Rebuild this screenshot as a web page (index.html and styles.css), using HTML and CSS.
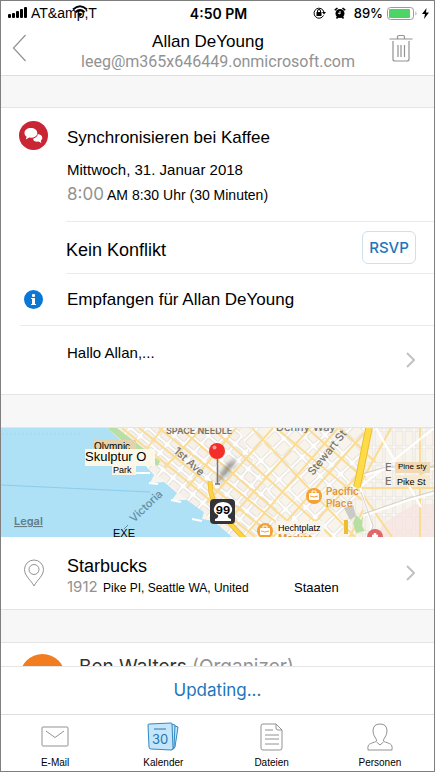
FILE: index.html
```html
<!DOCTYPE html>
<html lang="de">
<head>
<meta charset="utf-8">
<meta name="viewport" content="width=device-width, initial-scale=1">
<title>Synchronisieren bei Kaffee</title>
<link rel="stylesheet" href="styles.css">
</head>
<body>
<div class="phone">
  <div class="status">
    <div class="status-side">
      <svg class="signal" width="20" height="12" viewBox="0 0 20 12" aria-hidden="true"><rect x="0" y="7" width="3" height="4" rx="1"/><rect x="4" y="6" width="3" height="5" rx="1"/><rect x="8" y="4" width="3" height="7" rx="1"/><rect x="12" y="2" width="3" height="9" rx="1"/><rect x="16" y="0" width="3" height="11" rx="1"/></svg>
      <span class="carrier">AT&amp;amp;T
        <svg class="wifi" width="16" height="12" viewBox="0 0 16 12" aria-hidden="true"><path d="M1 4.500Q8-2 15 4.500M3.500 7.200Q8 3 12.500 7.200" fill="none" stroke="#000" stroke-width="2"/><path d="M5.500 9Q8 7 10.500 9L8 11.500Z"/></svg>
      </span>
    </div>
    <span class="clock">4:50 PM</span>
    <div class="status-side status-right">
      <svg width="13" height="12" viewBox="0 0 13 12" aria-hidden="true"><path d="M10.500 8.500A5 5 0 1 1 10.900 5" fill="none" stroke="#000"/><path d="M9 5h4L11 7.500Z"/><rect x="3.500" y="5" width="5" height="4"/><path d="M4.500 5V4a1.500 1.500 0 0 1 3 0V5" fill="none" stroke="#000"/></svg>
      <svg class="alarm" width="12" height="12" viewBox="0 0 12 12" aria-hidden="true"><circle cx="6" cy="6.500" r="4.500"/><path d="M.8 3.200L3.500 1M11.200 3.200L8.500 1M2.500 11.500l1.500-2M9.500 11.500L8 9.500" stroke="#000" stroke-width="1.600"/><path d="M6 4v3l-2-1" fill="none" stroke="#fff"/></svg>
      <span class="percent">89%</span>
      <svg width="31" height="13" viewBox="0 0 31 13" aria-hidden="true"><rect x=".5" y=".5" width="26" height="12" rx="3" fill="#fff" stroke="#999"/><rect x="2" y="2" width="21" height="9" rx="1" fill="#4cd464"/><path d="M28.500 4.500v4q2-2 0-4" fill="#999"/></svg>
      <svg class="bolt" width="7" height="11" viewBox="0 0 7 11" aria-hidden="true"><path d="M4.500 0L0 6h3L2 11l5-6.500H4Z"/></svg>
    </div>
  </div>

  <header class="header">
    <button class="icon-button" type="button" aria-label="Zurück"><svg width="15" height="28" viewBox="0 0 15 28"><path d="M13.500 1L1.500 14l12 13" fill="none" stroke="#929292" stroke-width="1.200"/></svg></button>
    <div class="heading">
      <h1>Allan DeYoung</h1>
      <p>leeg@m365x646449.onmicrosoft.com</p>
    </div>
    <button class="icon-button trash" type="button" aria-label="Löschen"><svg width="24" height="28" viewBox="0 0 24 28"><path d="M.5 5h23M8.500 5V3q0-1.500 1.500-1.500h4q1.500 0 1.500 1.500v2M4 7v18q0 2 2 2h12q2 0 2-2V7M9 11v12M12 11v12M15.500 11v12" fill="none" stroke="#929292" stroke-width="1.200"/></svg></button>
  </header>

  <main class="content">
    <section class="card">
      <div class="summary">
        <svg class="badge" width="29" height="29" viewBox="0 0 29 29" aria-hidden="true"><circle cx="14.500" cy="14.500" r="14.500" fill="#c92534"/><path d="M11.800 7c-3.600 0-6.300 2.100-6.300 4.900 0 1.600.8 2.900 2.100 3.800L6.800 18.500l3.400-1.900c4.600.6 8.100-1.600 8.100-4.700C18.300 9.100 15.400 7 11.800 7Z" fill="#fff"/><path d="M18.800 13c2.700.2 4.500 1.700 4.500 3.800 0 1.200-.6 2.200-1.500 2.900l.6 2.400-2.900-1.500c-3.100.5-5.300-.9-5.500-2.900 2.700-.6 4.500-2.200 4.800-4.700Z" fill="#fff"/></svg>
        <div class="summary-text">
          <h2>Synchronisieren bei Kaffee</h2>
          <p class="date">Mittwoch, 31. Januar 2018</p>
          <p class="time"><span class="ios">8:00</span> AM 8:30 Uhr (30 Minuten)</p>
        </div>
      </div>
      <div class="conflict">
        <span class="large">Kein Konflikt</span>
        <button class="rsvp" type="button">RSVP</button>
      </div>
      <div class="received">
        <svg class="info" width="19" height="19" viewBox="0 0 19 19" aria-hidden="true"><circle cx="9.500" cy="9.500" r="9.500" fill="#0a77d5"/><rect x="8" y="4" width="3" height="3" rx="1" fill="#fff"/><path d="M7 8h4v6h1v1H7v-1h1V9H7Z" fill="#fff"/></svg>
        <span>Empfangen für Allan DeYoung</span>
      </div>
      <a class="message" href="#nachricht"><span>Hallo Allan,...</span><svg class="chevron" width="9" height="16" viewBox="0 0 9 16" aria-hidden="true"><path d="M1 1l7 7-7 7"/></svg></a>
    </section>

    <section class="card place">
      <svg class="map" viewBox="1 428 433 109" role="img" aria-label="Karte">
        <defs>
          <pattern id="west" width="13" height="11" patternUnits="userSpaceOnUse" patternTransform="translate(217 486) rotate(40)"><rect width="13" height="11" fill="#fff"/><rect x="1.500" y="1.500" width="10" height="8" rx="1" fill="#f5f0e9" stroke="#dedad3" stroke-width=".8"/></pattern>
          <pattern id="mid" width="13" height="16" patternUnits="userSpaceOnUse" patternTransform="translate(270 470) rotate(46)"><rect width="13" height="16" fill="#fff"/><rect x="1.500" y="1.500" width="10" height="13" rx="1" fill="#f8f3eb" stroke="#e1ddd5" stroke-width=".8"/></pattern>
          <pattern id="east" width="10" height="17" patternUnits="userSpaceOnUse" patternTransform="translate(374 430)"><rect width="10" height="17" fill="#fff"/><rect x="1" y="1" width="8" height="15" fill="#f8f3eb" stroke="#e2ded6" stroke-width=".8"/></pattern>
          <clipPath id="land"><path d="M107 428H434V537H232L214 521L202 519L204 512L187 500L172 500L177 493L164 482L150 483L154 475L143 463L126 445Z"/></clipPath>
          <filter id="soft"><feGaussianBlur stdDeviation="2"/></filter>
        </defs>
        <rect x="1" y="428" width="433" height="109" fill="#aee0f6"/>
        <g clip-path="url(#land)">
          <rect x="100" y="428" width="334" height="109" fill="#f9f4ec"/>
          <path d="M118 428H250L330 537H232L145 465Z" fill="url(#west)"/>
          <path d="M238 428H372L355 537H290Z" fill="url(#mid)"/>
          <path d="M372 428H434V537H350L357 487Z" fill="url(#east)"/>
          <path d="M385 522l30-18h19v33h-60Z" fill="#f8e2e1" opacity=".7"/>
          <path d="M107 428h10l43 33-2 5-13-6-18-15Z" fill="#b9dfa5"/>
          <g fill="none" stroke="#fbdc94" stroke-width="2">
            <path d="M122 428L255 537M139 428L274 537M159 428L286 530M180 428L306 537M212 428L332 537M252 428L355 537M276 428L362 500M307 428L360 475M340 428L375 462M145 451L163 428M164 468L202 428M187 488L236 428M207 503L273 428M228 521L310 428M248 532L338 428M273 537L364 433M302 537L356 477M391 428L358 488L392 537M356 488H434M363 510L350 537M409 483L434 465M420 537V428"/>
          </g>
          <g fill="none" stroke="#fff" stroke-width="2.200"><path d="M365 475L386 469H434M360 487L372 526L367 537M363 516L409 500L434 493M360 487L434 428M376 428L421 507"/></g>
          <g fill="none" stroke="#c9c8c3" stroke-width=".8"><path d="M362 474L386 467H434M363 514L409 498L434 491M361 492L373 526L369 537"/></g>
          <path d="M344 508l9-3 3 11-6 4Z" fill="#cccac5"/>
          <path d="M353 523l3-8 5 5 2-4-1 10 3 5-9 2Z" fill="#b7e0a0"/>
          <path d="M369 428L357 487" fill="none" stroke="#eabd36" stroke-width="7.500"/>
          <path d="M369 428L357 487" fill="none" stroke="#ffdc45" stroke-width="5.500"/>
          <path d="M346 520v14" stroke="#efbd31" stroke-width="4"/>
          <path d="M210 481L211 493Q213 501 220 511T245 539" fill="none" stroke="#efb936" stroke-width="5"/>
          <path d="M210 481L211 493Q213 501 220 511T245 539" fill="none" stroke="#ffd341" stroke-width="3.500"/>
        </g>
        <path d="M1 485L150 492" stroke="#83c6ef" stroke-width=".8"/>
        <path d="M2 434H80" stroke="#91cdef" stroke-width=".5" stroke-dasharray="2 2"/>
        <path d="M130 473h20M149 483l9 1M171 500l10 2M192 519l10 2" stroke="#fff" stroke-width="2"/>
        <g class="map-text">
          <text x="166" y="434" class="district">SPACE NEEDLE</text>
          <text x="276" y="431" class="street">Denny Way</text>
          <text transform="translate(173 452) rotate(42)" class="street">1st Ave</text>
          <text transform="translate(313 476) rotate(-51)" class="street">Stewart St</text>
          <text transform="translate(134 523) rotate(-44)" class="bay">Victoria</text>
          <path d="M124 529l4-4" stroke="#668e9f"/>
          <text x="14" y="525" class="legal">Legal</text>
          <text x="326" y="495" class="mall">Pacific</text>
          <text x="326" y="507" class="mall">Place</text>
          <text x="278" y="542" class="mall">Market</text>
          <text x="385" y="471" class="street">E</text>
          <text x="385" y="485" class="street">E</text>
        </g>
        <g id="shops"><circle cx="314" cy="496" r="8" fill="#f3a233"/><rect x="309" y="493" width="10" height="7" rx="1" fill="#fff"/><path d="M312 493v-2h4v2M309 496h10" fill="none" stroke="#fff"/><path d="M310 496q4 2 8 0" fill="none" stroke="#f3a233"/><circle cx="265" cy="531" r="8" fill="#f3a233"/><rect x="260" y="528" width="10" height="7" rx="1" fill="#fff"/><path d="M263 528v-2h4v2" fill="none" stroke="#fff"/><path d="M261 531q4 2 8 0" fill="none" stroke="#f3a233"/></g>
        <circle cx="375" cy="537" r="8" fill="#df6969"/><path d="M375 533v5M372 536h6" stroke="#fff" stroke-width="2.500"/>
        <path d="M217 482Q224 463 236 459Q235 467 217 484" fill="#555" opacity=".6" filter="url(#soft)"/>
        <path d="M217.500 455v29M215 484h5" stroke="#777" stroke-width="1.500"/>
        <circle cx="217" cy="451" r="8" fill="#f32e2b"/><circle cx="214.500" cy="447.500" r="2" fill="#ff9c98"/>
        <rect x="210" y="499" width="25" height="25" rx="4" fill="#343437"/>
        <path d="M215 519q4-1 3-4-5-2-4-7 2-6 9-6 7 0 9 6 1 5-4 7-1 3 3 4v2h-16Z" fill="#fff"/>
        <text x="223" y="514" class="route">99</text>
        <rect x="93" y="440" width="43" height="11" fill="#e4d3aa"/>
        <text x="94" y="450" class="overlay small">Olympic</text>
        <rect x="112" y="463" width="24" height="12" fill="#faf4e5"/>
        <text x="113" y="473" class="overlay tiny">Park</text>
        <rect x="85" y="449" width="70" height="17" fill="#fbf8e9"/>
        <text x="85" y="461" class="overlay medium">Skulptur O</text>
        <text x="113" y="537" class="overlay exit">EXE</text>
        <rect x="276" y="521" width="48" height="12" fill="#f9f5ed"/>
        <text x="278" y="531" class="overlay tiny">Hechtplatz</text>
        <rect x="395" y="462" width="35" height="11" fill="#f1d9b5"/>
        <text x="398" y="469" class="overlay tiniest">Pine sty</text>
        <rect x="395" y="475" width="35" height="12" fill="#f8ead1"/>
        <text x="397" y="485" class="overlay tiny">Pike St</text>
      </svg>
      <a class="location" href="#ort">
        <svg class="pin" width="22" height="28" viewBox="0 0 22 28" aria-hidden="true"><path d="M11 27C8 21 1.500 17 1.500 10.500a9.500 9.500 0 0 1 19 0C20.500 17 14 21 11 27Z"/><circle cx="11" cy="10.500" r="5"/></svg>
        <span class="location-text">
          <strong>Starbucks</strong>
          <span class="address"><span class="number">1912</span> <span class="street-line">Pike PI, Seattle WA, United</span> <span class="country">Staaten</span></span>
        </span>
        <svg class="chevron" width="9" height="16" viewBox="0 0 9 16" aria-hidden="true"><path d="M1 1l7 7-7 7"/></svg>
      </a>
    </section>

    <section class="card organizer">
      <span class="avatar"></span>
      <span>Ben Walters <span class="role">(Organizer)</span></span>
    </section>
  </main>

  <div class="updating" role="status">Updating...</div>
  <nav class="tabs">
    <a href="#mail"><svg width="28" height="30" viewBox="0 0 28 30" aria-hidden="true"><rect x="1" y="5" width="26" height="19" rx="1"/><path d="M5 9l9 6.500L23 9"/></svg><span>E-Mail</span></a>
    <a href="#kalender" aria-current="page"><svg width="34" height="30" viewBox="0 0 34 30" aria-hidden="true"><path class="cal" d="M26 3l6 2-3 20q-1 3-4 2L24 4Z"/><path class="cal" d="M25 2l4 1-1 22q0 2-3 3Z"/><path class="cal" d="M2 3q0-1 1-1l22-1q1 0 1 1l1 24q0 2-2 2l-20-1q-2 0-2-2Z"/><path class="cal-line" d="M8 7h12"/><text x="14" y="22">30</text></svg><span>Kalender</span></a>
    <a href="#dateien"><svg width="24" height="30" viewBox="0 0 24 30" aria-hidden="true"><path d="M3 2h13l6 6v18q0 2-2 2H3q-2 0-2-2V4q0-2 2-2ZM16 2v4q0 2 2 2h4M5 8h8M5 13h14M5 17h14M5 22h14"/></svg><span>Dateien</span></a>
    <a href="#personen"><svg width="26" height="30" viewBox="0 0 26 30" aria-hidden="true"><path d="M9.500 19q0-2-1-3Q6 13 6 9q0-7 7-7t7 7q0 4-2.500 7-1 1-1 3c0 1 6.500 2 8 4q1 2 .5 5H1q-.5-3 .5-5c1.500-2 8-3 8-4ZM9.500 20l3.500 3 3.500-3"/></svg><span>Personen</span></a>
  </nav>
</div>
</body>
</html>
```
FILE: styles.css
```css
* { box-sizing: border-box; }

body {
  margin: 0;
  background: #fff;
  color: #000;
  font-family: "Liberation Sans", Arial, sans-serif;
  font-size: 17px;
}

h1, h2, p { margin: 0; font-weight: 400; }
a { color: inherit; text-decoration: none; }
button { font: inherit; cursor: pointer; }
svg { display: block; flex: none; }

.phone {
  display: flex;
  flex-direction: column;
  height: 100vh;
  border: 1px solid #7f7f7f;
}

/* Status bar */
.status {
  display: grid;
  grid-template-columns: 1fr auto 1fr;
  align-items: center;
  height: 24px;
  padding: 0 5px 0 7px;
}
.status-side { display: flex; align-items: center; gap: 3px; }
.status-right { justify-content: flex-end; gap: 4px; }
.carrier { position: relative; font-size: 14px; }
.wifi { position: absolute; left: 41px; top: 0; }
.clock { font: 600 14px Inter, sans-serif; }
.percent { font: 500 13px Inter, sans-serif; }
.alarm { margin: 0 4px; }

/* Title bar */
.header {
  display: flex;
  align-items: center;
  height: 51px;
  padding: 0 21px 4px 11px;
  border-bottom: 1px solid #dedede;
}
.icon-button { padding: 0; border: 0; background: none; }
.heading { flex: 1; padding: 5px 0 0 20px; text-align: center; }
.heading h1 { padding-right: 20px; font-size: 17px; line-height: 22px; }
.heading p {
  color: #929292;
  font: 16px/18px Roboto, sans-serif;
}

/* Scrolling content */
.content {
  display: flex;
  flex: 1;
  flex-direction: column;
  gap: 32px;
  min-height: 0;
  padding-top: 31px;
  overflow: hidden;
  background: #f7f7f7;
}
.card {
  flex: none;
  background: #fff;
  border-top: 1px solid #e4e4e4;
  border-bottom: 1px solid #e4e4e4;
}
.summary { display: flex; gap: 19px; padding: 13px 18px 13px; }
.summary h2 { padding-top: 5px; font-size: 17px; line-height: 24px; }
.date { margin-top: 8px; font-size: 15px; line-height: 24px; }
.time { font-size: 14px; line-height: 25px; }
.ios { color: #929292; font: 17px/24px Inter, sans-serif; }

.conflict {
  display: flex;
  align-items: center;
  justify-content: space-between;
  height: 53px;
  margin-left: 65px;
  padding-right: 18px;
  border-top: 1px solid #ebebeb;
  border-bottom: 1px solid #ebebeb;
}
.large { padding-top: 6px; font-size: 18px; }
.rsvp {
  width: 54px;
  height: 33px;
  padding: 0;
  border: 1px solid #cfe0e8;
  border-radius: 6px;
  background: #fff;
  color: #1c76bb;
  font: 500 15px Inter, sans-serif;
}
.received {
  display: flex;
  align-items: center;
  gap: 24px;
  height: 52px;
  margin-left: 19px;
  padding-left: 4px;
  border-bottom: 1px solid #ebebeb;
}
.message {
  display: flex;
  align-items: center;
  justify-content: space-between;
  height: 68px;
  padding: 0 19px 0 66px;
  font-size: 15px;
}
.message span { padding-bottom: 16px; }
.chevron path { fill: none; stroke: #c2c2c2; stroke-width: 2; }

/* Map */
.map { width: 100%; height: auto; }
.map-text { fill: #77736d; font-family: Inter, sans-serif; }
.district { font-size: 9px; font-weight: 600; }
.street { font-size: 11px; font-weight: 500; }
.bay { fill: #668e9f; font-size: 11px; font-weight: 500; }
.legal { fill: #627d88; font-size: 11px; font-weight: 600; text-decoration: underline; }
.mall { fill: #df9637; font-size: 10px; font-weight: 600; }
.route { font: 700 11px Inter, sans-serif; text-anchor: middle; }
.overlay { fill: #000; font-family: "Liberation Sans", Arial, sans-serif; }
.tiniest { font-size: 8px; }
.tiny { font-size: 9px; }
.small { font-size: 10px; }
.exit { font-size: 11px; }
.medium { font-size: 13px; }

.location {
  display: flex;
  align-items: center;
  height: 72px;
  padding: 0 19px 0 22px;
}
.pin { fill: none; stroke: #929292; stroke-width: 1; }
.location-text { flex: 1; padding: 6px 0 0 22px; }
.location strong { display: block; font-size: 18px; font-weight: 400; line-height: 22px; }
.address { display: flex; align-items: baseline; line-height: 20px; }
.number { width: 36px; color: #929292; font-family: Inter, sans-serif; font-size: 15px; }
.street-line { width: 191px; font-size: 12px; }
.country { font-size: 13px; }

.organizer {
  display: flex;
  gap: 14px;
  padding: 11px 19px;
  color: #333;
  font: 19px/26px Inter, sans-serif;
}
.avatar { width: 45px; height: 45px; border-radius: 50%; background: #f17d20; }
.role { color: #929292; }

/* Footer */
.updating {
  height: 48px;
  border-top: 1px solid #e4e4e4;
  color: #1c76bb;
  font: 17px/47px Inter, sans-serif;
  text-align: center;
}
.tabs {
  display: grid;
  grid-template-columns: repeat(4, 1fr);
  height: 57px;
  border-top: 1px solid #dedede;
}
.tabs a {
  display: flex;
  flex-direction: column;
  align-items: center;
  gap: 3px;
  padding-top: 7px;
  font-size: 10px;
  line-height: 16px;
}
.tabs path, .tabs rect { fill: none; stroke: #929292; stroke-width: 1; }
.tabs .cal { fill: #c5e5f8; stroke: #3289c4; }
.tabs .cal-line { stroke: #1c76bb; }
.tabs text { fill: #1c76bb; font: 13px Inter, sans-serif; text-anchor: middle; }
```
